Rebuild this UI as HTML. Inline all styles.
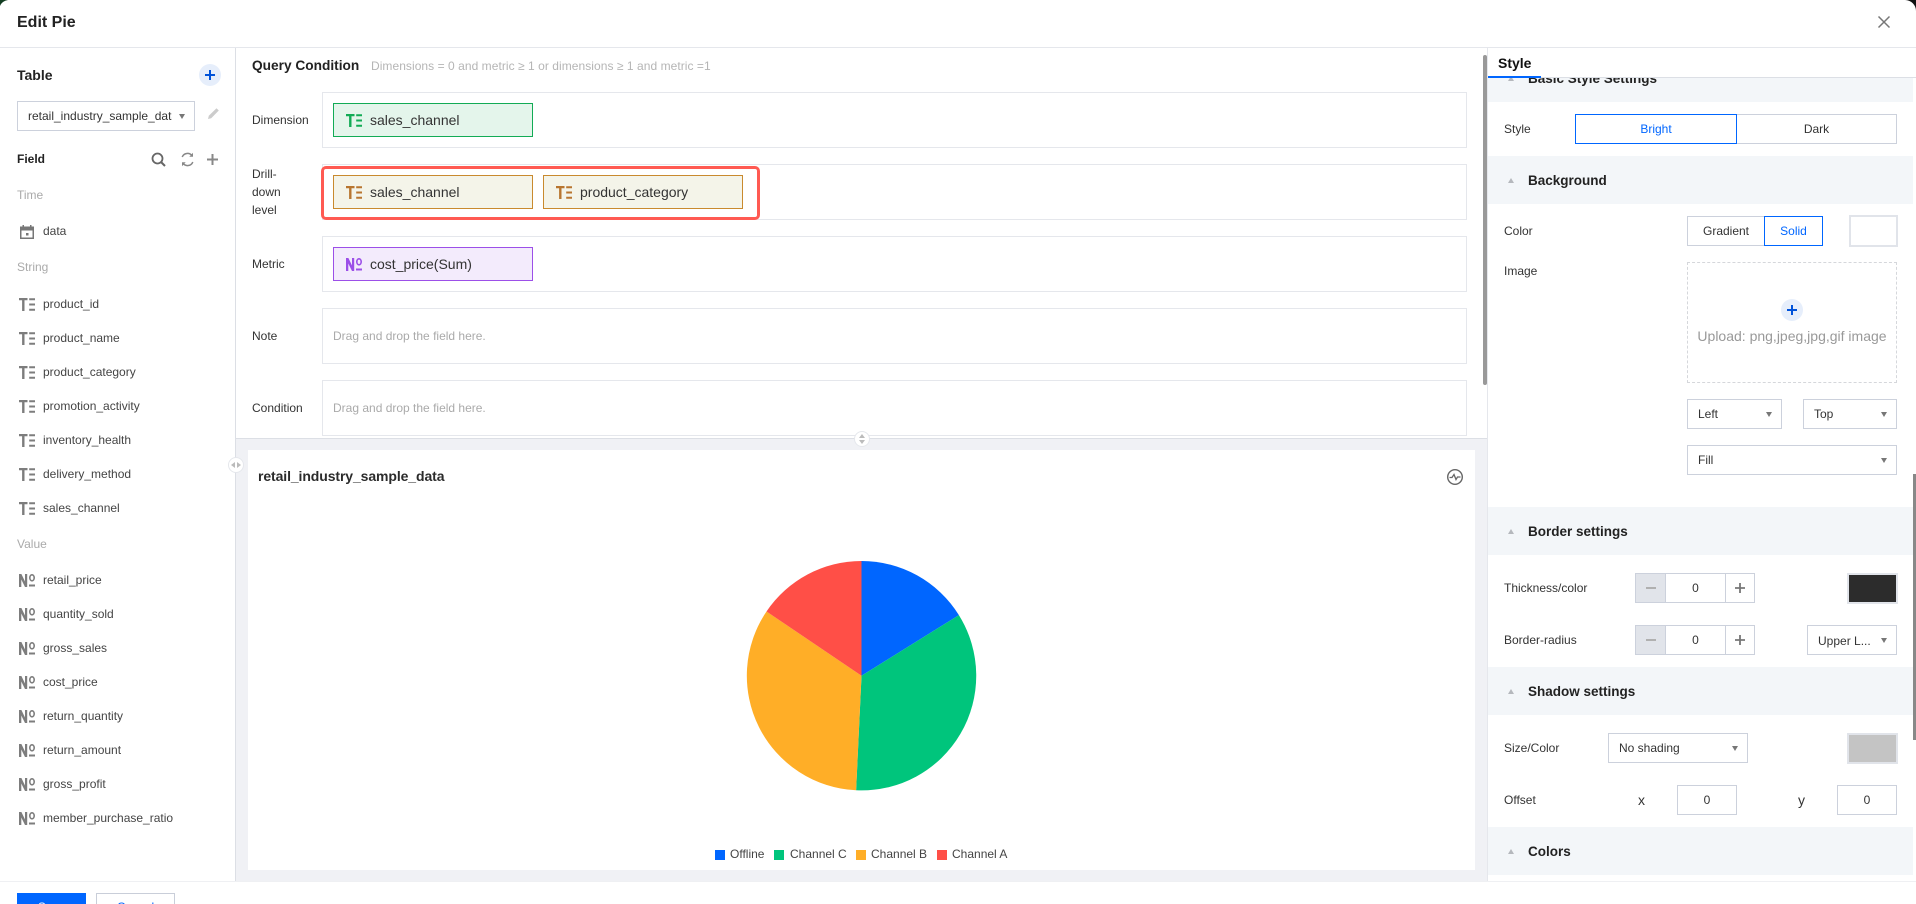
<!DOCTYPE html>
<html lang="en">
<head>
<meta charset="utf-8">
<title>Edit Pie</title>
<style>
*{box-sizing:border-box;margin:0;padding:0}
html,body{width:1916px;height:904px;overflow:hidden;background:#fff}
body{position:relative;font-family:"Liberation Sans",sans-serif;font-size:12px;color:#333}
.a{position:absolute}
.t{position:absolute;white-space:nowrap;line-height:18px;height:18px;font-size:12px;color:#333}
.g{color:#aaa}
.f{color:#444}
.b{font-weight:bold;color:#222}
.ic{position:absolute;left:19px;width:16px;height:13px;margin-top:-.5px;fill:#7d7d7d}
.box{position:absolute;left:322px;width:1145px;height:56px;border:1px solid #e5e7ec}
.chip{position:absolute;width:200px;height:34px;border:1px solid;font-size:14px;line-height:32px;padding-left:36px;color:#333;white-space:nowrap}
.chip svg{position:absolute;left:12px;top:9.500px;width:16px;height:13px}
.sec{position:absolute;left:1488px;width:425px;height:48px;background:#f3f6f9;font-size:13.500px;font-weight:bold;color:#222;line-height:50px;padding-left:40px}
.sec:before{content:"";position:absolute;left:20px;top:22px;border-left:3.500px solid transparent;border-right:3.500px solid transparent;border-bottom:5px solid #b5b8bd}
.in{position:absolute;border:1px solid #ccd1dc;height:30px;line-height:28px;background:#fff;color:#333;font-size:12px;white-space:nowrap}
.sel{padding-left:10px}
.sel:after{content:"";position:absolute;right:9px;top:12px;border-left:3.500px solid transparent;border-right:3.500px solid transparent;border-top:5px solid #777}
.c{text-align:center}
.on{border-color:#0066ff;color:#0066ff;z-index:1}
.sw{position:absolute;left:1847px;width:51px;height:31px;border:2px solid #e1e4ea}
</style>
</head>
<body>
<!-- corners -->
<svg class="a" style="left:0;top:0" width="9" height="7" viewBox="0 0 9 7"><path d="M0 0h8Q2 1 0 6z" fill="#123d22"/></svg>
<svg class="a" style="left:1904px;top:0" width="12" height="12" viewBox="0 0 12 12"><path d="M1 0h11v11A11 11 0 0 0 1 0z" fill="#111"/></svg>

<!-- header -->
<div class="t" style="left:17px;top:12px;font-size:16px;line-height:22px;height:22px;font-weight:bold;color:#222">Edit Pie</div>
<svg class="a" style="left:1877px;top:15px" width="14" height="14" viewBox="0 0 14 14"><path d="M1.500 1.500l11 11M12.500 1.500l-11 11" stroke="#777" stroke-width="1.500" fill="none"/></svg>
<div class="a" style="left:0;top:47px;width:1916px;height:1px;background:#e5e7ec"></div>

<!-- left panel -->
<div class="t b" style="left:17px;top:66px;font-size:14px">Table</div>
<div class="a" style="left:199px;top:64px;width:22px;height:22px;border-radius:50%;background:#e6eefb"></div>
<svg class="a" style="left:204px;top:69px" width="12" height="12" viewBox="0 0 12 12"><path d="M6 1v10M1 6h10" stroke="#0052d9" stroke-width="2"/></svg>
<div class="in sel" style="left:17px;top:101px;width:178px"><div style="width:144px;overflow:hidden">retail_industry_sample_data</div></div>
<svg class="a" style="left:207px;top:107px" width="13" height="13" viewBox="0 0 13 13"><path d="M1 12l.8-3.200L9.500 1.200l2.300 2.300L4.200 11.200z" fill="#ccc"/></svg>
<div class="t b" style="left:17px;top:150px">Field</div>
<svg class="a" style="left:151px;top:152px" width="15" height="15" viewBox="0 0 15 15"><circle cx="6.500" cy="6.500" r="5" fill="none" stroke="#666" stroke-width="1.800"/><path d="M10 10l4 4" stroke="#666" stroke-width="2"/></svg>
<svg class="a" style="left:180px;top:152px" width="15" height="15" viewBox="0 0 15 15"><path d="M2.200 5A5.600 5.600 0 0 1 12 3.800M12.800 10a5.600 5.600 0 0 1-9.800 1.200" fill="none" stroke="#888" stroke-width="1.500"/><path d="M13 .8v4H9.300zM2 14.200v-4h3.700z" fill="#888"/></svg>
<svg class="a" style="left:207px;top:154px" width="11" height="11" viewBox="0 0 11 11"><path d="M5.500 0v11M0 5.500h11" stroke="#888" stroke-width="2"/></svg>

<div class="t g" style="left:17px;top:186px">Time</div>
<svg class="a" style="left:20px;top:225px" width="14" height="14" viewBox="0 0 14 14"><path d="M0 1.500h2.500V0h1.500v1.500h6V0h1.500v1.500H14V14H0zM1.500 5.500v7h11v-7z" fill="#777" fill-rule="evenodd"/><rect x="6" y="8" width="2.500" height="2.500" fill="#777"/></svg>
<div class="t f" style="left:43px;top:222px">data</div>
<div class="t g" style="left:17px;top:258px">String</div>

<svg class="ic" style="top:298px" viewBox="0 0 16 13"><path d="M0 0h8.500v2.200H5.500V13H3.100V2.200H0zM10.200 .3H16v2h-5.800zM10.200 5.500H16v2h-5.800zM10.200 10.700H16v2h-5.800z"/></svg><div class="t f" style="left:43px;top:295px">product_id</div>
<svg class="ic" style="top:332px" viewBox="0 0 16 13"><path d="M0 0h8.500v2.200H5.500V13H3.100V2.200H0zM10.200 .3H16v2h-5.800zM10.200 5.500H16v2h-5.800zM10.200 10.700H16v2h-5.800z"/></svg><div class="t f" style="left:43px;top:329px">product_name</div>
<svg class="ic" style="top:366px" viewBox="0 0 16 13"><path d="M0 0h8.500v2.200H5.500V13H3.100V2.200H0zM10.200 .3H16v2h-5.800zM10.200 5.500H16v2h-5.800zM10.200 10.700H16v2h-5.800z"/></svg><div class="t f" style="left:43px;top:363px">product_category</div>
<svg class="ic" style="top:400px" viewBox="0 0 16 13"><path d="M0 0h8.500v2.200H5.500V13H3.100V2.200H0zM10.200 .3H16v2h-5.800zM10.200 5.500H16v2h-5.800zM10.200 10.700H16v2h-5.800z"/></svg><div class="t f" style="left:43px;top:397px">promotion_activity</div>
<svg class="ic" style="top:434px" viewBox="0 0 16 13"><path d="M0 0h8.500v2.200H5.500V13H3.100V2.200H0zM10.200 .3H16v2h-5.800zM10.200 5.500H16v2h-5.800zM10.200 10.700H16v2h-5.800z"/></svg><div class="t f" style="left:43px;top:431px">inventory_health</div>
<svg class="ic" style="top:468px" viewBox="0 0 16 13"><path d="M0 0h8.500v2.200H5.500V13H3.100V2.200H0zM10.200 .3H16v2h-5.800zM10.200 5.500H16v2h-5.800zM10.200 10.700H16v2h-5.800z"/></svg><div class="t f" style="left:43px;top:465px">delivery_method</div>
<svg class="ic" style="top:502px" viewBox="0 0 16 13"><path d="M0 0h8.500v2.200H5.500V13H3.100V2.200H0zM10.200 .3H16v2h-5.800zM10.200 5.500H16v2h-5.800zM10.200 10.700H16v2h-5.800z"/></svg><div class="t f" style="left:43px;top:499px">sales_channel</div>

<div class="t g" style="left:17px;top:535px">Value</div>

<svg class="ic" style="top:574px" viewBox="0 0 16 13"><path d="M0 13V0h2.400L6 7.500V0h2.200v13H6L2.300 5.500V13z"/><ellipse cx="13" cy="3.800" rx="2.200" ry="3" fill="none" stroke="#7d7d7d" stroke-width="1.600"/><rect x="10" y="10.500" width="6" height="2"/></svg><div class="t f" style="left:43px;top:571px">retail_price</div>
<svg class="ic" style="top:608px" viewBox="0 0 16 13"><path d="M0 13V0h2.400L6 7.500V0h2.200v13H6L2.300 5.500V13z"/><ellipse cx="13" cy="3.800" rx="2.200" ry="3" fill="none" stroke="#7d7d7d" stroke-width="1.600"/><rect x="10" y="10.500" width="6" height="2"/></svg><div class="t f" style="left:43px;top:605px">quantity_sold</div>
<svg class="ic" style="top:642px" viewBox="0 0 16 13"><path d="M0 13V0h2.400L6 7.500V0h2.200v13H6L2.300 5.500V13z"/><ellipse cx="13" cy="3.800" rx="2.200" ry="3" fill="none" stroke="#7d7d7d" stroke-width="1.600"/><rect x="10" y="10.500" width="6" height="2"/></svg><div class="t f" style="left:43px;top:639px">gross_sales</div>
<svg class="ic" style="top:676px" viewBox="0 0 16 13"><path d="M0 13V0h2.400L6 7.500V0h2.200v13H6L2.300 5.500V13z"/><ellipse cx="13" cy="3.800" rx="2.200" ry="3" fill="none" stroke="#7d7d7d" stroke-width="1.600"/><rect x="10" y="10.500" width="6" height="2"/></svg><div class="t f" style="left:43px;top:673px">cost_price</div>
<svg class="ic" style="top:710px" viewBox="0 0 16 13"><path d="M0 13V0h2.400L6 7.500V0h2.200v13H6L2.300 5.500V13z"/><ellipse cx="13" cy="3.800" rx="2.200" ry="3" fill="none" stroke="#7d7d7d" stroke-width="1.600"/><rect x="10" y="10.500" width="6" height="2"/></svg><div class="t f" style="left:43px;top:707px">return_quantity</div>
<svg class="ic" style="top:744px" viewBox="0 0 16 13"><path d="M0 13V0h2.400L6 7.500V0h2.200v13H6L2.300 5.500V13z"/><ellipse cx="13" cy="3.800" rx="2.200" ry="3" fill="none" stroke="#7d7d7d" stroke-width="1.600"/><rect x="10" y="10.500" width="6" height="2"/></svg><div class="t f" style="left:43px;top:741px">return_amount</div>
<svg class="ic" style="top:778px" viewBox="0 0 16 13"><path d="M0 13V0h2.400L6 7.500V0h2.200v13H6L2.300 5.500V13z"/><ellipse cx="13" cy="3.800" rx="2.200" ry="3" fill="none" stroke="#7d7d7d" stroke-width="1.600"/><rect x="10" y="10.500" width="6" height="2"/></svg><div class="t f" style="left:43px;top:775px">gross_profit</div>
<svg class="ic" style="top:812px" viewBox="0 0 16 13"><path d="M0 13V0h2.400L6 7.500V0h2.200v13H6L2.300 5.500V13z"/><ellipse cx="13" cy="3.800" rx="2.200" ry="3" fill="none" stroke="#7d7d7d" stroke-width="1.600"/><rect x="10" y="10.500" width="6" height="2"/></svg><div class="t f" style="left:43px;top:809px">member_purchase_ratio</div>

<div class="a" style="left:235px;top:48px;width:1px;height:833px;background:#dcdfe5"></div>

<!-- query area -->
<div class="t b" style="left:252px;top:57px;font-size:13.700px">Query Condition</div>
<div class="t" style="left:371px;top:57px;color:#b5b5b5;letter-spacing:.05px">Dimensions = 0 and metric ≥ 1 or dimensions ≥ 1 and metric =1</div>

<div class="t" style="left:252px;top:111px">Dimension</div>
<div class="box" style="top:92px"></div>
<div class="chip" style="left:333px;top:103px;background:#e4f5eb;border-color:#12ab55">
<svg viewBox="0 0 16 13" fill="#12ab55"><path d="M0 0h8.500v2.200H5.500V13H3.100V2.200H0zM10.200 .3H16v2h-5.800zM10.200 5.500H16v2h-5.800zM10.200 10.700H16v2h-5.800z"/></svg>sales_channel</div>

<div class="t" style="left:252px;top:165px">Drill-</div>
<div class="t" style="left:252px;top:183px">down</div>
<div class="t" style="left:252px;top:201px">level</div>
<div class="box" style="top:164px"></div>
<div class="a" style="left:321px;top:166px;width:439px;height:54px;border:3px solid #ff5a52;border-radius:5px"></div>
<div class="chip" style="left:333px;top:175px;background:#f4f4e9;border-color:#c98a2e">
<svg viewBox="0 0 16 13" fill="#b8752f"><path d="M0 0h8.500v2.200H5.500V13H3.100V2.200H0zM10.200 .3H16v2h-5.800zM10.200 5.500H16v2h-5.800zM10.200 10.700H16v2h-5.800z"/></svg>sales_channel</div>
<div class="chip" style="left:543px;top:175px;background:#f4f4e9;border-color:#c98a2e">
<svg viewBox="0 0 16 13" fill="#b8752f"><path d="M0 0h8.500v2.200H5.500V13H3.100V2.200H0zM10.200 .3H16v2h-5.800zM10.200 5.500H16v2h-5.800zM10.200 10.700H16v2h-5.800z"/></svg>product_category</div>

<div class="t" style="left:252px;top:255px">Metric</div>
<div class="box" style="top:236px"></div>
<div class="chip" style="left:333px;top:247px;background:#f3ebfc;border-color:#9c4fe8">
<svg viewBox="0 0 16 13" fill="#9c4fe8"><path d="M0 13V0h2.400L6 7.500V0h2.200v13H6L2.300 5.500V13z"/><ellipse cx="13" cy="3.800" rx="2.200" ry="3" fill="none" stroke="#9c4fe8" stroke-width="1.600"/><rect x="10" y="10.500" width="6" height="2"/></svg>cost_price(Sum)</div>

<div class="t" style="left:252px;top:327px">Note</div>
<div class="box" style="top:308px"></div>
<div class="t" style="left:333px;top:327px;color:#aaa">Drag and drop the field here.</div>

<div class="t" style="left:252px;top:399px">Condition</div>
<div class="box" style="top:380px"></div>
<div class="t" style="left:333px;top:399px;color:#aaa">Drag and drop the field here.</div>

<!-- chart area -->
<div class="a" style="left:236px;top:438px;width:1252px;height:443px;background:#f0f1f5;border-top:1px solid #dcdfe5"></div>
<div class="a" style="left:248px;top:450px;width:1227px;height:420px;background:#fff"></div>
<div class="t b" style="left:258px;top:467px;font-size:14px;color:#2b2b2b;letter-spacing:-.1px">retail_industry_sample_data</div>
<svg class="a" style="left:1446px;top:468px" width="18" height="18" viewBox="0 0 18 18"><circle cx="9" cy="9" r="7.300" fill="none" stroke="#666" stroke-width="1.400"/><path d="M3.500 9.500h2.500l2-3 2 5 1.500-2.500h3" fill="none" stroke="#666" stroke-width="1.300"/></svg>

<svg class="a" style="left:740px;top:555px" width="243" height="243" viewBox="-121.500 -120.700 243 243">
<path d="M0 0L0-114.700A114.700 114.700 0 0 1 97.400-60.600Z" fill="#0066ff"/>
<path d="M0 0L97.400-60.600A114.700 114.700 0 0 1-5.400 114.600Z" fill="#00c57c"/>
<path d="M0 0L-5.400 114.600A114.700 114.700 0 0 1-95-64.200Z" fill="#ffae27"/>
<path d="M0 0L-95-64.200A114.700 114.700 0 0 1 0-114.700Z" fill="#ff4f47"/>
</svg>
<div class="a" style="left:715px;top:850px;width:10px;height:10px;background:#0066ff"></div><div class="t f" style="left:730px;top:845px">Offline</div>
<div class="a" style="left:774px;top:850px;width:10px;height:10px;background:#00c57c"></div><div class="t f" style="left:790px;top:845px">Channel C</div>
<div class="a" style="left:856px;top:850px;width:10px;height:10px;background:#ffae27"></div><div class="t f" style="left:871px;top:845px">Channel B</div>
<div class="a" style="left:937px;top:850px;width:10px;height:10px;background:#ff4f47"></div><div class="t f" style="left:952px;top:845px">Channel A</div>

<!-- handles -->
<div class="a" style="left:228px;top:457px;width:16px;height:16px;border-radius:50%;background:#fff;border:1px solid #e5e7ec"></div>
<div class="a" style="left:231px;top:462px;border-top:3px solid transparent;border-bottom:3px solid transparent;border-right:4px solid #bbb"></div>
<div class="a" style="left:237px;top:462px;border-top:3px solid transparent;border-bottom:3px solid transparent;border-left:4px solid #bbb"></div>
<div class="a" style="left:854px;top:431px;width:16px;height:16px;border-radius:50%;background:#fff;border:1px solid #e5e7ec"></div>
<div class="a" style="left:859px;top:434px;border-left:3px solid transparent;border-right:3px solid transparent;border-bottom:4px solid #bbb"></div>
<div class="a" style="left:859px;top:440px;border-left:3px solid transparent;border-right:3px solid transparent;border-top:4px solid #bbb"></div>

<div class="a" style="left:1483px;top:55px;width:4px;height:330px;background:#999;border-radius:2px"></div>
<div class="a" style="left:1487px;top:48px;width:1px;height:833px;background:#e5e7ec"></div>

<!-- right panel -->
<div class="sec" style="top:54px">Basic Style Settings</div>
<div class="a" style="left:1488px;top:48px;width:428px;height:30px;background:#fff;border-bottom:1px solid #dcdfe5"></div>
<div class="t" style="left:1498px;top:54px;font-size:14px;font-weight:bold;color:#111">Style</div>
<div class="a" style="left:1488px;top:76px;width:53px;height:2px;background:#0066ff"></div>

<div class="t" style="left:1504px;top:120px">Style</div>
<div class="in c on" style="left:1575px;top:114px;width:162px">Bright</div>
<div class="in c" style="left:1736px;top:114px;width:161px">Dark</div>

<div class="sec" style="top:156px">Background</div>
<div class="t" style="left:1504px;top:222px">Color</div>
<div class="in c" style="left:1687px;top:216px;width:78px">Gradient</div>
<div class="in c on" style="left:1764px;top:216px;width:59px">Solid</div>
<div class="sw" style="left:1849px;width:49px;top:215px;height:32px;background:#fff"></div>
<div class="t" style="left:1504px;top:262px">Image</div>
<div class="a" style="left:1687px;top:262px;width:210px;height:121px;border:1px dashed #d5d7db"></div>
<div class="a" style="left:1781px;top:299px;width:22px;height:22px;border-radius:50%;background:#e6eefb"></div>
<svg class="a" style="left:1786px;top:304px" width="12" height="12" viewBox="0 0 12 12"><path d="M6 1v10M1 6h10" stroke="#0052d9" stroke-width="2"/></svg>
<div class="t" style="left:1687px;top:327px;width:210px;text-align:center;font-size:14px;color:#999">Upload: png,jpeg,jpg,gif image</div>
<div class="in sel" style="left:1687px;top:399px;width:95px">Left</div>
<div class="in sel" style="left:1803px;top:399px;width:94px">Top</div>
<div class="in sel" style="left:1687px;top:445px;width:210px">Fill</div>

<div class="sec" style="top:507px">Border settings</div>
<div class="t" style="left:1504px;top:579px">Thickness/color</div>
<div class="in c" style="left:1635px;top:573px;width:31px;background:#e1e4ea"><svg width="10" height="10" viewBox="0 0 10 10" style="margin-top:9px"><path d="M0 5h10" stroke="#aaa" stroke-width="1.800"/></svg></div>
<div class="in c" style="left:1665px;top:573px;width:61px">0</div>
<div class="in c" style="left:1725px;top:573px;width:30px"><svg width="10" height="10" viewBox="0 0 10 10" style="margin-top:9px"><path d="M5 0v10M0 5h10" stroke="#777" stroke-width="1.800"/></svg></div>
<div class="sw" style="top:573px;background:#2c2c2c"></div>

<div class="t" style="left:1504px;top:631px">Border-radius</div>
<div class="in c" style="left:1635px;top:625px;width:31px;background:#e1e4ea"><svg width="10" height="10" viewBox="0 0 10 10" style="margin-top:9px"><path d="M0 5h10" stroke="#aaa" stroke-width="1.800"/></svg></div>
<div class="in c" style="left:1665px;top:625px;width:61px">0</div>
<div class="in c" style="left:1725px;top:625px;width:30px"><svg width="10" height="10" viewBox="0 0 10 10" style="margin-top:9px"><path d="M5 0v10M0 5h10" stroke="#777" stroke-width="1.800"/></svg></div>
<div class="in sel" style="left:1807px;top:625px;width:90px;line-height:30px">Upper L...</div>

<div class="sec" style="top:667px">Shadow settings</div>
<div class="t" style="left:1504px;top:739px">Size/Color</div>
<div class="in sel" style="left:1608px;top:733px;width:140px">No shading</div>
<div class="sw" style="top:733px;background:#c4c4c4"></div>
<div class="t" style="left:1504px;top:791px">Offset</div>
<div class="t" style="left:1638px;top:791px;font-size:14px">x</div>
<div class="in c" style="left:1677px;top:785px;width:60px">0</div>
<div class="t" style="left:1798px;top:791px;font-size:14px">y</div>
<div class="in c" style="left:1837px;top:785px;width:60px">0</div>
<div class="sec" style="top:827px">Colors</div>

<div class="a" style="left:1913px;top:474px;width:3px;height:266px;background:#888"></div>

<!-- footer -->
<div class="a" style="left:0;top:881px;width:1916px;height:23px;background:#fff;border-top:1px solid #eff0f3"></div>
<div class="a c" style="left:17px;top:893px;width:69px;height:28px;background:#0066ff;color:#fff;line-height:28px">Save</div>
<div class="a c" style="left:96px;top:893px;width:79px;height:28px;border:1px solid #c9ced9;color:#0066ff;line-height:26px">Cancel</div>
</body>
</html>
